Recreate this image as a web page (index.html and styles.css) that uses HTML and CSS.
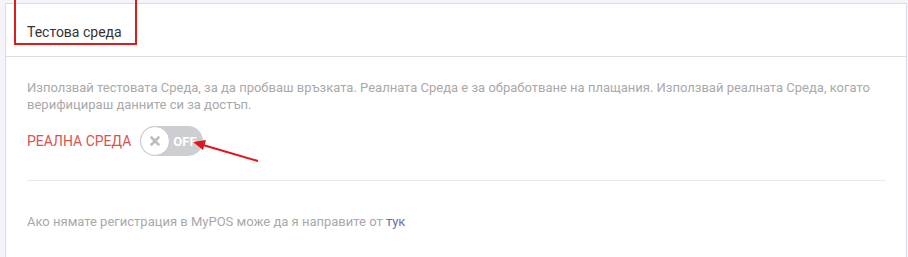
FILE: index.html
```html
<!DOCTYPE html>
<html lang="bg">
<head>
<meta charset="utf-8">
<link rel="stylesheet" href="styles.css">
</head>
<body>
<div class="page">
  <div class="card">
    <div class="card-header">
      <h3 class="title">Тестова среда</h3>
    </div>
    <div class="card-body">
      <p class="desc">Използвай тестовата Среда, за да пробваш връзката. Реалната Среда е за обработване на плащания. Използвай реалната Среда, когато верифицираш данните си за достъп.</p>
      <div class="switch-row">
        <span class="switch-label">РЕАЛНА СРЕДА</span>
        <span class="switch">
          <span class="knob">
            <svg width="12" height="12" viewBox="0 0 12 12"><path d="M2.5 2.5 L9.5 9.5 M9.5 2.5 L2.5 9.5" stroke="#bdbdbd" stroke-width="2.6" stroke-linecap="round"/></svg>
          </span>
          <span class="switch-text">OFF</span>
        </span>
      </div>
      <hr class="divider">
      <p class="note">Ако нямате регистрация в MyPOS може да я направите от <a class="link" href="#">тук</a></p>
    </div>
  </div>
  <div class="highlight"></div>
  <svg class="arrow" width="908" height="257" viewBox="0 0 908 257">
    <line x1="258" y1="161" x2="203" y2="145" stroke="#e3151a" stroke-width="2"/>
    <polygon points="193,142 206,140 203,150" fill="#e3151a"/>
  </svg>
</div>
</body>
</html>
```
FILE: styles.css
```css
html, body {
  margin: 0;
  padding: 0;
}
body {
  background: #f4f4fa;
  font-family: Roboto, "Noto Sans", sans-serif;
  width: 908px;
  height: 257px;
  overflow: hidden;
}
.page {
  position: relative;
  width: 908px;
  height: 257px;
  padding: 3px 1px 0 5px;
  box-sizing: border-box;
}
.card {
  background: #fff;
  border: 1px solid #dcdce9;
  border-bottom: none;
  height: 260px;
}
.card-header {
  height: 52px;
  border-bottom: 1px solid #dcdce4;
  padding: 0 21px;
  display: flex;
  align-items: flex-end;
}
.title {
  margin: 0 0 15px 0;
  font-size: 14px;
  font-weight: 400;
  color: #333;
  line-height: 18px;
}
.card-body {
  padding: 22px 20px 0 21px;
}
.desc {
  margin: 0;
  font-size: 13px;
  line-height: 17px;
  color: #a9a9a9;
  max-width: 860px;
}
.switch-row {
  display: flex;
  align-items: center;
  margin-top: 13px;
  gap: 9px;
}
.switch-label {
  font-size: 14px;
  color: #d9534f;
}
.switch {
  display: flex;
  align-items: center;
  width: 63px;
  height: 30px;
  background: #ccced1;
  border-radius: 15px;
  box-sizing: border-box;
}
.knob {
  width: 30px;
  height: 30px;
  border-radius: 50%;
  background: #fff;
  border: 1px solid #c9c9c9;
  box-sizing: border-box;
  display: flex;
  align-items: center;
  justify-content: center;
}
.switch-text {
  color: #fff;
  font-weight: 700;
  font-size: 13px;
  margin-left: 3px;
}
.divider {
  border: none;
  border-top: 1px solid #e9e9e9;
  margin: 24px 0 0 0;
}
.note {
  margin: 32px 0 0 0;
  font-size: 13px;
  line-height: 17px;
  color: #a9a9a9;
}
.link {
  color: #6a6ea6;
  text-decoration: none;
}
.highlight {
  position: absolute;
  left: 14px;
  top: -3px;
  width: 119px;
  height: 44px;
  border: 2px solid #e01b1b;
}
.arrow {
  position: absolute;
  left: 0;
  top: 0;
  pointer-events: none;
}
```
